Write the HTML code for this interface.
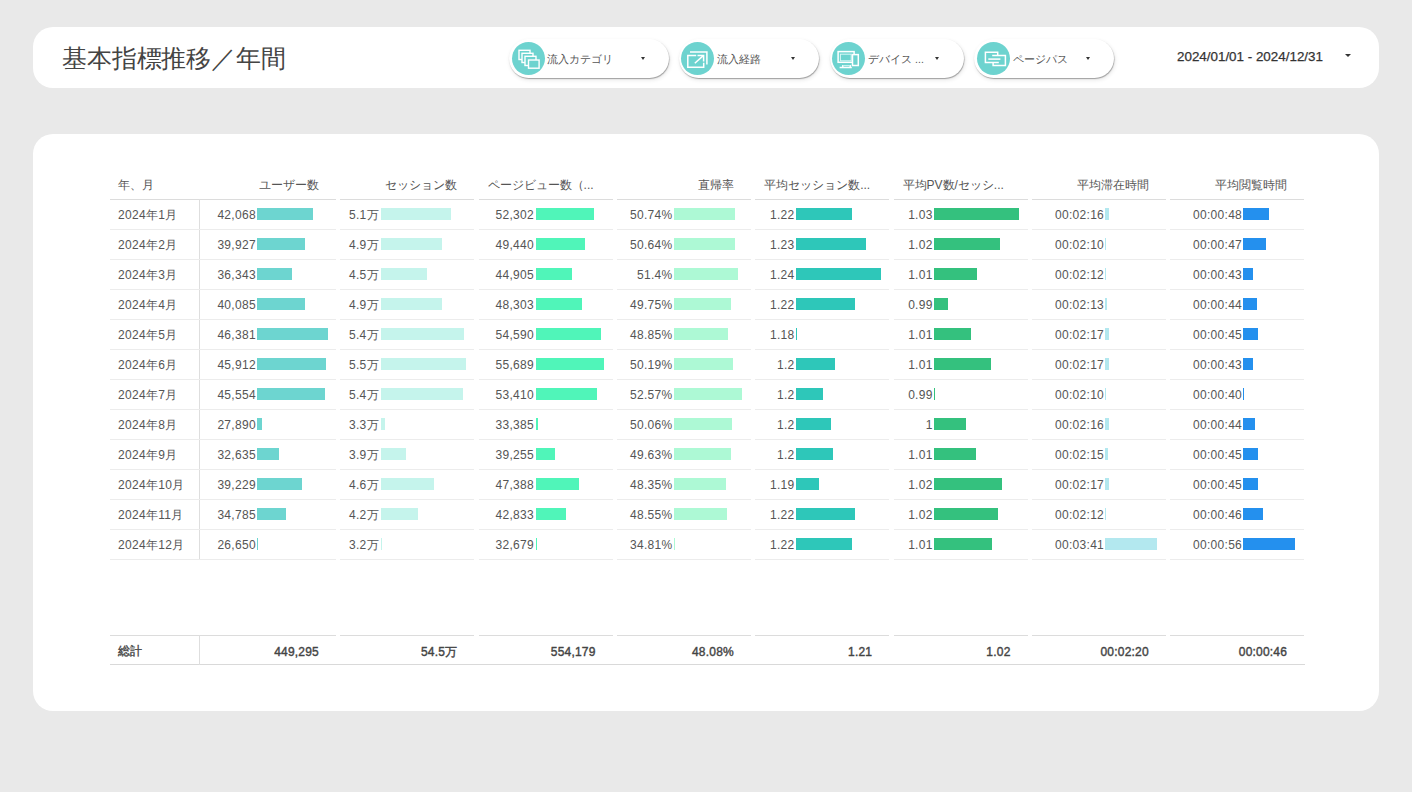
<!DOCTYPE html>
<html><head><meta charset="utf-8"><style>
*{margin:0;padding:0;box-sizing:border-box}
html,body{width:1412px;height:792px;overflow:hidden;background:#e9e9e9;font-family:"Liberation Sans",sans-serif;}
.card{position:absolute;background:#fff;border-radius:20px}
.t{position:absolute;white-space:nowrap;font-size:12px;line-height:14px;color:#555555;letter-spacing:0.3px}
.h{position:absolute;white-space:nowrap;font-size:12px;line-height:14px;color:#555555}
.b{position:absolute;height:12px}
.ln{position:absolute;height:1px}
.chip{position:absolute;top:39px;height:39px;background:#fff;border-radius:20px;box-shadow:0.5px 1px 1px rgba(0,0,0,0.32),1px 2px 4px rgba(0,0,0,0.10)}
.circ{position:absolute;top:2.5px;width:33px;height:33px;border-radius:50%;background:#6dd3cf}
.ct{position:absolute;top:13.8px;font-size:10.5px;line-height:12px;color:#555;white-space:nowrap}
.arr{position:absolute;top:18px;width:0;height:0;border-left:2.5px solid transparent;border-right:2.5px solid transparent;border-top:3px solid #333}
</style></head><body>
<div class="card" style="left:33px;top:27px;width:1346px;height:61px"></div>
<div class="t" style="left:62px;top:42.5px;font-size:25px;line-height:30px;color:#444;letter-spacing:-0.15px">基本指標推移／年間</div>
<div class="chip" style="left:509px;width:160px"><div class="circ" style="left:2.7px"><svg width="33" height="33" viewBox="0 0 33 33"><g fill="#6dd3cf" stroke="#fff" stroke-width="1.4"><rect x="7" y="8.3" width="11" height="9.2"/><rect x="10" y="11.3" width="11" height="9.2"/><rect x="13" y="14.3" width="11" height="9.2"/><rect x="16.5" y="18" width="10.6" height="8.2"/></g></svg></div><div class="ct" style="left:38px">流入カテゴリ</div><div class="arr" style="left:131.5px"></div></div>
<div class="chip" style="left:678.5px;width:140px"><div class="circ" style="left:2.7px"><svg width="33" height="33" viewBox="0 0 33 33"><g fill="none" stroke="#fff" stroke-width="1.5"><path d="M9 10.1H25.9V22.4"/><path d="M15.2 13.5H6.8V25.3H22.7V20.8"/><path d="M16.5 13.4H22.6V19.4"/><path d="M13.8 21.2L22 13.9"/></g></svg></div><div class="ct" style="left:38.200000000000045px">流入経路</div><div class="arr" style="left:112.2px"></div></div>
<div class="chip" style="left:829.6px;width:134px"><div class="circ" style="left:2.7px"><svg width="33" height="33" viewBox="0 0 33 33"><g fill="none" stroke="#fff" stroke-width="1.5"><rect x="6.1" y="9.6" width="16" height="10.7"/><rect x="8.4" y="12.2" width="10.8" height="6.6" stroke-width="1" stroke="#d8f7f5"/><path d="M7.6 25.6H19.8M10.8 23V25.6M18.2 23V25.6"/><path d="M10.8 23.6H18.2" stroke-width="1.2" stroke="#c8f2ef"/><rect x="20.5" y="12.6" width="5.8" height="10.9" fill="#6dd3cf"/></g></svg></div><div class="ct" style="left:38.60000000000002px">デバイス ...</div><div class="arr" style="left:105.4px"></div></div>
<div class="chip" style="left:974px;width:140px"><div class="circ" style="left:2.7px"><svg width="33" height="33" viewBox="0 0 33 33"><g fill="none" stroke="#fff" stroke-width="1.5"><path d="M20.7 13.3V10.3H8.4V20.6H21.8"/><path d="M16.1 20.2V23.5H28.4V13.5H15.2"/><path d="M11.3 17.1H23.4"/></g></svg></div><div class="ct" style="left:38.60000000000002px">ページパス</div><div class="arr" style="left:112.2px"></div></div>
<div class="t" style="left:1177px;top:49px;font-size:13.4px;line-height:15px;color:#333;letter-spacing:0;-webkit-text-stroke:0.25px #333">2024/01/01 - 2024/12/31</div>
<div class="arr" style="left:1344.5px;top:54px;border-left-width:3.5px;border-right-width:3.5px;border-top-width:3.5px"></div>
<div class="card" style="left:33px;top:133.5px;width:1346px;height:577.5px"></div>
<div class="h" style="left:118px;top:178px">年、月</div>
<div class="ln" style="left:110px;top:199px;width:92px;background:#dcdcdc"></div>
<div class="ln" style="left:110px;top:635px;width:92px;background:#dcdcdc"></div>
<div class="ln" style="left:110px;top:664px;width:1195px;background:#d9d9d9"></div>
<div style="position:absolute;left:198.5px;top:199px;width:1.5px;height:361px;background:#dedede"></div>
<div style="position:absolute;left:198.5px;top:635px;width:1.5px;height:30px;background:#dedede"></div>
<div class="t" style="left:118px;top:208px">2024年1月</div>
<div class="ln" style="left:110px;top:229px;width:92px;background:#ececec"></div>
<div class="t" style="left:118px;top:238px">2024年2月</div>
<div class="ln" style="left:110px;top:259px;width:92px;background:#ececec"></div>
<div class="t" style="left:118px;top:268px">2024年3月</div>
<div class="ln" style="left:110px;top:289px;width:92px;background:#ececec"></div>
<div class="t" style="left:118px;top:298px">2024年4月</div>
<div class="ln" style="left:110px;top:319px;width:92px;background:#ececec"></div>
<div class="t" style="left:118px;top:328px">2024年5月</div>
<div class="ln" style="left:110px;top:349px;width:92px;background:#ececec"></div>
<div class="t" style="left:118px;top:358px">2024年6月</div>
<div class="ln" style="left:110px;top:379px;width:92px;background:#ececec"></div>
<div class="t" style="left:118px;top:388px">2024年7月</div>
<div class="ln" style="left:110px;top:409px;width:92px;background:#ececec"></div>
<div class="t" style="left:118px;top:418px">2024年8月</div>
<div class="ln" style="left:110px;top:439px;width:92px;background:#ececec"></div>
<div class="t" style="left:118px;top:448px">2024年9月</div>
<div class="ln" style="left:110px;top:469px;width:92px;background:#ececec"></div>
<div class="t" style="left:118px;top:478px">2024年10月</div>
<div class="ln" style="left:110px;top:499px;width:92px;background:#ececec"></div>
<div class="t" style="left:118px;top:508px">2024年11月</div>
<div class="ln" style="left:110px;top:529px;width:92px;background:#ececec"></div>
<div class="t" style="left:118px;top:538px">2024年12月</div>
<div class="ln" style="left:110px;top:559px;width:92px;background:#ececec"></div>
<div class="t" style="left:118px;top:644px;color:#444;letter-spacing:0;-webkit-text-stroke:0.35px #444">総計</div>
<div class="h" style="left:19.0px;width:300px;text-align:right;top:178px">ユーザー数</div>
<div class="ln" style="left:202.0px;top:199px;width:134px;background:#dcdcdc"></div>
<div class="ln" style="left:202.0px;top:635px;width:134px;background:#dcdcdc"></div>
<div class="t" style="left:55.9px;width:200px;text-align:right;top:208px">42,068</div><div class="b" style="left:257px;top:208.4px;width:55.5px;background:#6dd5d0"></div><div class="ln" style="left:202.0px;top:229px;width:134px;background:#ececec"></div>
<div class="t" style="left:55.9px;width:200px;text-align:right;top:238px">39,927</div><div class="b" style="left:257px;top:238.4px;width:47.8px;background:#6dd5d0"></div><div class="ln" style="left:202.0px;top:259px;width:134px;background:#ececec"></div>
<div class="t" style="left:55.9px;width:200px;text-align:right;top:268px">36,343</div><div class="b" style="left:257px;top:268.4px;width:34.9px;background:#6dd5d0"></div><div class="ln" style="left:202.0px;top:289px;width:134px;background:#ececec"></div>
<div class="t" style="left:55.9px;width:200px;text-align:right;top:298px">40,085</div><div class="b" style="left:257px;top:298.4px;width:48.3px;background:#6dd5d0"></div><div class="ln" style="left:202.0px;top:319px;width:134px;background:#ececec"></div>
<div class="t" style="left:55.9px;width:200px;text-align:right;top:328px">46,381</div><div class="b" style="left:257px;top:328.4px;width:71.0px;background:#6dd5d0"></div><div class="ln" style="left:202.0px;top:349px;width:134px;background:#ececec"></div>
<div class="t" style="left:55.9px;width:200px;text-align:right;top:358px">45,912</div><div class="b" style="left:257px;top:358.4px;width:69.3px;background:#6dd5d0"></div><div class="ln" style="left:202.0px;top:379px;width:134px;background:#ececec"></div>
<div class="t" style="left:55.9px;width:200px;text-align:right;top:388px">45,554</div><div class="b" style="left:257px;top:388.4px;width:68.0px;background:#6dd5d0"></div><div class="ln" style="left:202.0px;top:409px;width:134px;background:#ececec"></div>
<div class="t" style="left:55.9px;width:200px;text-align:right;top:418px">27,890</div><div class="b" style="left:257px;top:418.4px;width:4.5px;background:#6dd5d0"></div><div class="ln" style="left:202.0px;top:439px;width:134px;background:#ececec"></div>
<div class="t" style="left:55.9px;width:200px;text-align:right;top:448px">32,635</div><div class="b" style="left:257px;top:448.4px;width:21.5px;background:#6dd5d0"></div><div class="ln" style="left:202.0px;top:469px;width:134px;background:#ececec"></div>
<div class="t" style="left:55.9px;width:200px;text-align:right;top:478px">39,229</div><div class="b" style="left:257px;top:478.4px;width:45.3px;background:#6dd5d0"></div><div class="ln" style="left:202.0px;top:499px;width:134px;background:#ececec"></div>
<div class="t" style="left:55.9px;width:200px;text-align:right;top:508px">34,785</div><div class="b" style="left:257px;top:508.4px;width:29.3px;background:#6dd5d0"></div><div class="ln" style="left:202.0px;top:529px;width:134px;background:#ececec"></div>
<div class="t" style="left:55.9px;width:200px;text-align:right;top:538px">26,650</div><div class="b" style="left:257px;top:538.4px;width:1.0px;background:#6dd5d0"></div><div class="ln" style="left:202.0px;top:559px;width:134px;background:#ececec"></div>
<div class="t" style="left:119.0px;width:200px;text-align:right;top:645px;letter-spacing:0.2px;color:#444;-webkit-text-stroke:0.4px #444">449,295</div>
<div class="h" style="left:157.3px;width:300px;text-align:right;top:178px">セッション数</div>
<div class="ln" style="left:340.3px;top:199px;width:134px;background:#dcdcdc"></div>
<div class="ln" style="left:340.3px;top:635px;width:134px;background:#dcdcdc"></div>
<div class="t" style="left:178.9px;width:200px;text-align:right;top:208px">5.1万</div><div class="b" style="left:381px;top:208.4px;width:69.8px;background:#c5f4ec"></div><div class="ln" style="left:340.3px;top:229px;width:134px;background:#ececec"></div>
<div class="t" style="left:178.9px;width:200px;text-align:right;top:238px">4.9万</div><div class="b" style="left:381px;top:238.4px;width:60.9px;background:#c5f4ec"></div><div class="ln" style="left:340.3px;top:259px;width:134px;background:#ececec"></div>
<div class="t" style="left:178.9px;width:200px;text-align:right;top:268px">4.5万</div><div class="b" style="left:381px;top:268.4px;width:45.8px;background:#c5f4ec"></div><div class="ln" style="left:340.3px;top:289px;width:134px;background:#ececec"></div>
<div class="t" style="left:178.9px;width:200px;text-align:right;top:298px">4.9万</div><div class="b" style="left:381px;top:298.4px;width:60.9px;background:#c5f4ec"></div><div class="ln" style="left:340.3px;top:319px;width:134px;background:#ececec"></div>
<div class="t" style="left:178.9px;width:200px;text-align:right;top:328px">5.4万</div><div class="b" style="left:381px;top:328.4px;width:82.8px;background:#c5f4ec"></div><div class="ln" style="left:340.3px;top:349px;width:134px;background:#ececec"></div>
<div class="t" style="left:178.9px;width:200px;text-align:right;top:358px">5.5万</div><div class="b" style="left:381px;top:358.4px;width:84.9px;background:#c5f4ec"></div><div class="ln" style="left:340.3px;top:379px;width:134px;background:#ececec"></div>
<div class="t" style="left:178.9px;width:200px;text-align:right;top:388px">5.4万</div><div class="b" style="left:381px;top:388.4px;width:81.7px;background:#c5f4ec"></div><div class="ln" style="left:340.3px;top:409px;width:134px;background:#ececec"></div>
<div class="t" style="left:178.9px;width:200px;text-align:right;top:418px">3.3万</div><div class="b" style="left:381px;top:418.4px;width:4.0px;background:#c5f4ec"></div><div class="ln" style="left:340.3px;top:439px;width:134px;background:#ececec"></div>
<div class="t" style="left:178.9px;width:200px;text-align:right;top:448px">3.9万</div><div class="b" style="left:381px;top:448.4px;width:25.1px;background:#c5f4ec"></div><div class="ln" style="left:340.3px;top:469px;width:134px;background:#ececec"></div>
<div class="t" style="left:178.9px;width:200px;text-align:right;top:478px">4.6万</div><div class="b" style="left:381px;top:478.4px;width:53.1px;background:#c5f4ec"></div><div class="ln" style="left:340.3px;top:499px;width:134px;background:#ececec"></div>
<div class="t" style="left:178.9px;width:200px;text-align:right;top:508px">4.2万</div><div class="b" style="left:381px;top:508.4px;width:36.9px;background:#c5f4ec"></div><div class="ln" style="left:340.3px;top:529px;width:134px;background:#ececec"></div>
<div class="t" style="left:178.9px;width:200px;text-align:right;top:538px">3.2万</div><div class="b" style="left:381px;top:538.4px;width:1.0px;background:#c5f4ec"></div><div class="ln" style="left:340.3px;top:559px;width:134px;background:#ececec"></div>
<div class="t" style="left:257.3px;width:200px;text-align:right;top:645px;letter-spacing:0.2px;color:#444;-webkit-text-stroke:0.4px #444">54.5万</div>
<div class="h" style="left:487.6px;top:178px">ページビュー数（...</div>
<div class="ln" style="left:478.6px;top:199px;width:134px;background:#dcdcdc"></div>
<div class="ln" style="left:478.6px;top:635px;width:134px;background:#dcdcdc"></div>
<div class="t" style="left:334.0px;width:200px;text-align:right;top:208px">52,302</div><div class="b" style="left:535.8px;top:208.4px;width:58.0px;background:#50f5b9"></div><div class="ln" style="left:478.6px;top:229px;width:134px;background:#ececec"></div>
<div class="t" style="left:334.0px;width:200px;text-align:right;top:238px">49,440</div><div class="b" style="left:535.8px;top:238.4px;width:49.5px;background:#50f5b9"></div><div class="ln" style="left:478.6px;top:259px;width:134px;background:#ececec"></div>
<div class="t" style="left:334.0px;width:200px;text-align:right;top:268px">44,905</div><div class="b" style="left:535.8px;top:268.4px;width:36.1px;background:#50f5b9"></div><div class="ln" style="left:478.6px;top:289px;width:134px;background:#ececec"></div>
<div class="t" style="left:334.0px;width:200px;text-align:right;top:298px">48,303</div><div class="b" style="left:535.8px;top:298.4px;width:46.2px;background:#50f5b9"></div><div class="ln" style="left:478.6px;top:319px;width:134px;background:#ececec"></div>
<div class="t" style="left:334.0px;width:200px;text-align:right;top:328px">54,590</div><div class="b" style="left:535.8px;top:328.4px;width:64.8px;background:#50f5b9"></div><div class="ln" style="left:478.6px;top:349px;width:134px;background:#ececec"></div>
<div class="t" style="left:334.0px;width:200px;text-align:right;top:358px">55,689</div><div class="b" style="left:535.8px;top:358.4px;width:68.0px;background:#50f5b9"></div><div class="ln" style="left:478.6px;top:379px;width:134px;background:#ececec"></div>
<div class="t" style="left:334.0px;width:200px;text-align:right;top:388px">53,410</div><div class="b" style="left:535.8px;top:388.4px;width:61.3px;background:#50f5b9"></div><div class="ln" style="left:478.6px;top:409px;width:134px;background:#ececec"></div>
<div class="t" style="left:334.0px;width:200px;text-align:right;top:418px">33,385</div><div class="b" style="left:535.8px;top:418.4px;width:2.1px;background:#50f5b9"></div><div class="ln" style="left:478.6px;top:439px;width:134px;background:#ececec"></div>
<div class="t" style="left:334.0px;width:200px;text-align:right;top:448px">39,255</div><div class="b" style="left:535.8px;top:448.4px;width:19.4px;background:#50f5b9"></div><div class="ln" style="left:478.6px;top:469px;width:134px;background:#ececec"></div>
<div class="t" style="left:334.0px;width:200px;text-align:right;top:478px">47,388</div><div class="b" style="left:535.8px;top:478.4px;width:43.5px;background:#50f5b9"></div><div class="ln" style="left:478.6px;top:499px;width:134px;background:#ececec"></div>
<div class="t" style="left:334.0px;width:200px;text-align:right;top:508px">42,833</div><div class="b" style="left:535.8px;top:508.4px;width:30.0px;background:#50f5b9"></div><div class="ln" style="left:478.6px;top:529px;width:134px;background:#ececec"></div>
<div class="t" style="left:334.0px;width:200px;text-align:right;top:538px">32,679</div><div class="b" style="left:535.8px;top:538.4px;width:1.0px;background:#50f5b9"></div><div class="ln" style="left:478.6px;top:559px;width:134px;background:#ececec"></div>
<div class="t" style="left:395.6px;width:200px;text-align:right;top:645px;letter-spacing:0.2px;color:#444;-webkit-text-stroke:0.4px #444">554,179</div>
<div class="h" style="left:433.9000000000001px;width:300px;text-align:right;top:178px">直帰率</div>
<div class="ln" style="left:616.9000000000001px;top:199px;width:134px;background:#dcdcdc"></div>
<div class="ln" style="left:616.9000000000001px;top:635px;width:134px;background:#dcdcdc"></div>
<div class="t" style="left:472.5px;width:200px;text-align:right;top:208px">50.74%</div><div class="b" style="left:674.1px;top:208.4px;width:61.0px;background:#adf9d5"></div><div class="ln" style="left:616.9000000000001px;top:229px;width:134px;background:#ececec"></div>
<div class="t" style="left:472.5px;width:200px;text-align:right;top:238px">50.64%</div><div class="b" style="left:674.1px;top:238.4px;width:60.6px;background:#adf9d5"></div><div class="ln" style="left:616.9000000000001px;top:259px;width:134px;background:#ececec"></div>
<div class="t" style="left:472.5px;width:200px;text-align:right;top:268px">51.4%</div><div class="b" style="left:674.1px;top:268.4px;width:63.5px;background:#adf9d5"></div><div class="ln" style="left:616.9000000000001px;top:289px;width:134px;background:#ececec"></div>
<div class="t" style="left:472.5px;width:200px;text-align:right;top:298px">49.75%</div><div class="b" style="left:674.1px;top:298.4px;width:57.2px;background:#adf9d5"></div><div class="ln" style="left:616.9000000000001px;top:319px;width:134px;background:#ececec"></div>
<div class="t" style="left:472.5px;width:200px;text-align:right;top:328px">48.85%</div><div class="b" style="left:674.1px;top:328.4px;width:53.8px;background:#adf9d5"></div><div class="ln" style="left:616.9000000000001px;top:349px;width:134px;background:#ececec"></div>
<div class="t" style="left:472.5px;width:200px;text-align:right;top:358px">50.19%</div><div class="b" style="left:674.1px;top:358.4px;width:58.9px;background:#adf9d5"></div><div class="ln" style="left:616.9000000000001px;top:379px;width:134px;background:#ececec"></div>
<div class="t" style="left:472.5px;width:200px;text-align:right;top:388px">52.57%</div><div class="b" style="left:674.1px;top:388.4px;width:68.0px;background:#adf9d5"></div><div class="ln" style="left:616.9000000000001px;top:409px;width:134px;background:#ececec"></div>
<div class="t" style="left:472.5px;width:200px;text-align:right;top:418px">50.06%</div><div class="b" style="left:674.1px;top:418.4px;width:58.4px;background:#adf9d5"></div><div class="ln" style="left:616.9000000000001px;top:439px;width:134px;background:#ececec"></div>
<div class="t" style="left:472.5px;width:200px;text-align:right;top:448px">49.63%</div><div class="b" style="left:674.1px;top:448.4px;width:56.7px;background:#adf9d5"></div><div class="ln" style="left:616.9000000000001px;top:469px;width:134px;background:#ececec"></div>
<div class="t" style="left:472.5px;width:200px;text-align:right;top:478px">48.35%</div><div class="b" style="left:674.1px;top:478.4px;width:51.8px;background:#adf9d5"></div><div class="ln" style="left:616.9000000000001px;top:499px;width:134px;background:#ececec"></div>
<div class="t" style="left:472.5px;width:200px;text-align:right;top:508px">48.55%</div><div class="b" style="left:674.1px;top:508.4px;width:52.6px;background:#adf9d5"></div><div class="ln" style="left:616.9000000000001px;top:529px;width:134px;background:#ececec"></div>
<div class="t" style="left:472.5px;width:200px;text-align:right;top:538px">34.81%</div><div class="b" style="left:674.1px;top:538.4px;width:1.0px;background:#adf9d5"></div><div class="ln" style="left:616.9000000000001px;top:559px;width:134px;background:#ececec"></div>
<div class="t" style="left:533.9000000000001px;width:200px;text-align:right;top:645px;letter-spacing:0.2px;color:#444;-webkit-text-stroke:0.4px #444">48.08%</div>
<div class="h" style="left:764.2px;top:178px">平均セッション数...</div>
<div class="ln" style="left:755.2px;top:199px;width:134px;background:#dcdcdc"></div>
<div class="ln" style="left:755.2px;top:635px;width:134px;background:#dcdcdc"></div>
<div class="t" style="left:594.5px;width:200px;text-align:right;top:208px">1.22</div><div class="b" style="left:795.8px;top:208.4px;width:56.2px;background:#2ec7b9"></div><div class="ln" style="left:755.2px;top:229px;width:134px;background:#ececec"></div>
<div class="t" style="left:594.5px;width:200px;text-align:right;top:238px">1.23</div><div class="b" style="left:795.8px;top:238.4px;width:69.9px;background:#2ec7b9"></div><div class="ln" style="left:755.2px;top:259px;width:134px;background:#ececec"></div>
<div class="t" style="left:594.5px;width:200px;text-align:right;top:268px">1.24</div><div class="b" style="left:795.8px;top:268.4px;width:85.0px;background:#2ec7b9"></div><div class="ln" style="left:755.2px;top:289px;width:134px;background:#ececec"></div>
<div class="t" style="left:594.5px;width:200px;text-align:right;top:298px">1.22</div><div class="b" style="left:795.8px;top:298.4px;width:59.4px;background:#2ec7b9"></div><div class="ln" style="left:755.2px;top:319px;width:134px;background:#ececec"></div>
<div class="t" style="left:594.5px;width:200px;text-align:right;top:328px">1.18</div><div class="b" style="left:795.8px;top:328.4px;width:1.2px;background:#2ec7b9"></div><div class="ln" style="left:755.2px;top:349px;width:134px;background:#ececec"></div>
<div class="t" style="left:594.5px;width:200px;text-align:right;top:358px">1.2</div><div class="b" style="left:795.8px;top:358.4px;width:39.1px;background:#2ec7b9"></div><div class="ln" style="left:755.2px;top:379px;width:134px;background:#ececec"></div>
<div class="t" style="left:594.5px;width:200px;text-align:right;top:388px">1.2</div><div class="b" style="left:795.8px;top:388.4px;width:27.0px;background:#2ec7b9"></div><div class="ln" style="left:755.2px;top:409px;width:134px;background:#ececec"></div>
<div class="t" style="left:594.5px;width:200px;text-align:right;top:418px">1.2</div><div class="b" style="left:795.8px;top:418.4px;width:35.7px;background:#2ec7b9"></div><div class="ln" style="left:755.2px;top:439px;width:134px;background:#ececec"></div>
<div class="t" style="left:594.5px;width:200px;text-align:right;top:448px">1.2</div><div class="b" style="left:795.8px;top:448.4px;width:37.3px;background:#2ec7b9"></div><div class="ln" style="left:755.2px;top:469px;width:134px;background:#ececec"></div>
<div class="t" style="left:594.5px;width:200px;text-align:right;top:478px">1.19</div><div class="b" style="left:795.8px;top:478.4px;width:23.1px;background:#2ec7b9"></div><div class="ln" style="left:755.2px;top:499px;width:134px;background:#ececec"></div>
<div class="t" style="left:594.5px;width:200px;text-align:right;top:508px">1.22</div><div class="b" style="left:795.8px;top:508.4px;width:59.0px;background:#2ec7b9"></div><div class="ln" style="left:755.2px;top:529px;width:134px;background:#ececec"></div>
<div class="t" style="left:594.5px;width:200px;text-align:right;top:538px">1.22</div><div class="b" style="left:795.8px;top:538.4px;width:56.0px;background:#2ec7b9"></div><div class="ln" style="left:755.2px;top:559px;width:134px;background:#ececec"></div>
<div class="t" style="left:672.2px;width:200px;text-align:right;top:645px;letter-spacing:0.2px;color:#444;-webkit-text-stroke:0.4px #444">1.21</div>
<div class="h" style="left:902.5px;top:178px">平均PV数/セッシ...</div>
<div class="ln" style="left:893.5px;top:199px;width:134px;background:#dcdcdc"></div>
<div class="ln" style="left:893.5px;top:635px;width:134px;background:#dcdcdc"></div>
<div class="t" style="left:732.7px;width:200px;text-align:right;top:208px">1.03</div><div class="b" style="left:934.1px;top:208.4px;width:84.7px;background:#34c17e"></div><div class="ln" style="left:893.5px;top:229px;width:134px;background:#ececec"></div>
<div class="t" style="left:732.7px;width:200px;text-align:right;top:238px">1.02</div><div class="b" style="left:934.1px;top:238.4px;width:66.0px;background:#34c17e"></div><div class="ln" style="left:893.5px;top:259px;width:134px;background:#ececec"></div>
<div class="t" style="left:732.7px;width:200px;text-align:right;top:268px">1.01</div><div class="b" style="left:934.1px;top:268.4px;width:43.4px;background:#34c17e"></div><div class="ln" style="left:893.5px;top:289px;width:134px;background:#ececec"></div>
<div class="t" style="left:732.7px;width:200px;text-align:right;top:298px">0.99</div><div class="b" style="left:934.1px;top:298.4px;width:14.4px;background:#34c17e"></div><div class="ln" style="left:893.5px;top:319px;width:134px;background:#ececec"></div>
<div class="t" style="left:732.7px;width:200px;text-align:right;top:328px">1.01</div><div class="b" style="left:934.1px;top:328.4px;width:37.0px;background:#34c17e"></div><div class="ln" style="left:893.5px;top:349px;width:134px;background:#ececec"></div>
<div class="t" style="left:732.7px;width:200px;text-align:right;top:358px">1.01</div><div class="b" style="left:934.1px;top:358.4px;width:56.6px;background:#34c17e"></div><div class="ln" style="left:893.5px;top:379px;width:134px;background:#ececec"></div>
<div class="t" style="left:732.7px;width:200px;text-align:right;top:388px">0.99</div><div class="b" style="left:934.1px;top:388.4px;width:0.9px;background:#34c17e"></div><div class="ln" style="left:893.5px;top:409px;width:134px;background:#ececec"></div>
<div class="t" style="left:732.7px;width:200px;text-align:right;top:418px">1</div><div class="b" style="left:934.1px;top:418.4px;width:31.5px;background:#34c17e"></div><div class="ln" style="left:893.5px;top:439px;width:134px;background:#ececec"></div>
<div class="t" style="left:732.7px;width:200px;text-align:right;top:448px">1.01</div><div class="b" style="left:934.1px;top:448.4px;width:41.8px;background:#34c17e"></div><div class="ln" style="left:893.5px;top:469px;width:134px;background:#ececec"></div>
<div class="t" style="left:732.7px;width:200px;text-align:right;top:478px">1.02</div><div class="b" style="left:934.1px;top:478.4px;width:67.6px;background:#34c17e"></div><div class="ln" style="left:893.5px;top:499px;width:134px;background:#ececec"></div>
<div class="t" style="left:732.7px;width:200px;text-align:right;top:508px">1.02</div><div class="b" style="left:934.1px;top:508.4px;width:63.5px;background:#34c17e"></div><div class="ln" style="left:893.5px;top:529px;width:134px;background:#ececec"></div>
<div class="t" style="left:732.7px;width:200px;text-align:right;top:538px">1.01</div><div class="b" style="left:934.1px;top:538.4px;width:58.4px;background:#34c17e"></div><div class="ln" style="left:893.5px;top:559px;width:134px;background:#ececec"></div>
<div class="t" style="left:810.5px;width:200px;text-align:right;top:645px;letter-spacing:0.2px;color:#444;-webkit-text-stroke:0.4px #444">1.02</div>
<div class="h" style="left:848.8000000000002px;width:300px;text-align:right;top:178px">平均滞在時間</div>
<div class="ln" style="left:1031.8000000000002px;top:199px;width:134px;background:#dcdcdc"></div>
<div class="ln" style="left:1031.8000000000002px;top:635px;width:134px;background:#dcdcdc"></div>
<div class="t" style="left:904.1px;width:200px;text-align:right;top:208px">00:02:16</div><div class="b" style="left:1105.2px;top:208.4px;width:3.8px;background:#b3e8ef"></div><div class="ln" style="left:1031.8000000000002px;top:229px;width:134px;background:#ececec"></div>
<div class="t" style="left:904.1px;width:200px;text-align:right;top:238px">00:02:10</div><div class="b" style="left:1105.2px;top:238.4px;width:1.0px;background:#b3e8ef"></div><div class="ln" style="left:1031.8000000000002px;top:259px;width:134px;background:#ececec"></div>
<div class="t" style="left:904.1px;width:200px;text-align:right;top:268px">00:02:12</div><div class="b" style="left:1105.2px;top:268.4px;width:1.0px;background:#b3e8ef"></div><div class="ln" style="left:1031.8000000000002px;top:289px;width:134px;background:#ececec"></div>
<div class="t" style="left:904.1px;width:200px;text-align:right;top:298px">00:02:13</div><div class="b" style="left:1105.2px;top:298.4px;width:1.4px;background:#b3e8ef"></div><div class="ln" style="left:1031.8000000000002px;top:319px;width:134px;background:#ececec"></div>
<div class="t" style="left:904.1px;width:200px;text-align:right;top:328px">00:02:17</div><div class="b" style="left:1105.2px;top:328.4px;width:3.8px;background:#b3e8ef"></div><div class="ln" style="left:1031.8000000000002px;top:349px;width:134px;background:#ececec"></div>
<div class="t" style="left:904.1px;width:200px;text-align:right;top:358px">00:02:17</div><div class="b" style="left:1105.2px;top:358.4px;width:4.1px;background:#b3e8ef"></div><div class="ln" style="left:1031.8000000000002px;top:379px;width:134px;background:#ececec"></div>
<div class="t" style="left:904.1px;width:200px;text-align:right;top:388px">00:02:10</div><div class="b" style="left:1105.2px;top:388.4px;width:1.0px;background:#b3e8ef"></div><div class="ln" style="left:1031.8000000000002px;top:409px;width:134px;background:#ececec"></div>
<div class="t" style="left:904.1px;width:200px;text-align:right;top:418px">00:02:16</div><div class="b" style="left:1105.2px;top:418.4px;width:3.8px;background:#b3e8ef"></div><div class="ln" style="left:1031.8000000000002px;top:439px;width:134px;background:#ececec"></div>
<div class="t" style="left:904.1px;width:200px;text-align:right;top:448px">00:02:15</div><div class="b" style="left:1105.2px;top:448.4px;width:2.8px;background:#b3e8ef"></div><div class="ln" style="left:1031.8000000000002px;top:469px;width:134px;background:#ececec"></div>
<div class="t" style="left:904.1px;width:200px;text-align:right;top:478px">00:02:17</div><div class="b" style="left:1105.2px;top:478.4px;width:4.1px;background:#b3e8ef"></div><div class="ln" style="left:1031.8000000000002px;top:499px;width:134px;background:#ececec"></div>
<div class="t" style="left:904.1px;width:200px;text-align:right;top:508px">00:02:12</div><div class="b" style="left:1105.2px;top:508.4px;width:1.0px;background:#b3e8ef"></div><div class="ln" style="left:1031.8000000000002px;top:529px;width:134px;background:#ececec"></div>
<div class="t" style="left:904.1px;width:200px;text-align:right;top:538px">00:03:41</div><div class="b" style="left:1105.2px;top:538.4px;width:52.1px;background:#b3e8ef"></div><div class="ln" style="left:1031.8000000000002px;top:559px;width:134px;background:#ececec"></div>
<div class="t" style="left:948.8000000000002px;width:200px;text-align:right;top:645px;letter-spacing:0.2px;color:#444;-webkit-text-stroke:0.4px #444">00:02:20</div>
<div class="h" style="left:987.1000000000001px;width:300px;text-align:right;top:178px">平均閲覧時間</div>
<div class="ln" style="left:1170.1000000000001px;top:199px;width:134px;background:#dcdcdc"></div>
<div class="ln" style="left:1170.1000000000001px;top:635px;width:134px;background:#dcdcdc"></div>
<div class="t" style="left:1042.1px;width:200px;text-align:right;top:208px">00:00:48</div><div class="b" style="left:1243.2px;top:208.4px;width:26.2px;background:#2490ee"></div><div class="ln" style="left:1170.1000000000001px;top:229px;width:134px;background:#ececec"></div>
<div class="t" style="left:1042.1px;width:200px;text-align:right;top:238px">00:00:47</div><div class="b" style="left:1243.2px;top:238.4px;width:22.6px;background:#2490ee"></div><div class="ln" style="left:1170.1000000000001px;top:259px;width:134px;background:#ececec"></div>
<div class="t" style="left:1042.1px;width:200px;text-align:right;top:268px">00:00:43</div><div class="b" style="left:1243.2px;top:268.4px;width:9.8px;background:#2490ee"></div><div class="ln" style="left:1170.1000000000001px;top:289px;width:134px;background:#ececec"></div>
<div class="t" style="left:1042.1px;width:200px;text-align:right;top:298px">00:00:44</div><div class="b" style="left:1243.2px;top:298.4px;width:13.7px;background:#2490ee"></div><div class="ln" style="left:1170.1000000000001px;top:319px;width:134px;background:#ececec"></div>
<div class="t" style="left:1042.1px;width:200px;text-align:right;top:328px">00:00:45</div><div class="b" style="left:1243.2px;top:328.4px;width:14.4px;background:#2490ee"></div><div class="ln" style="left:1170.1000000000001px;top:349px;width:134px;background:#ececec"></div>
<div class="t" style="left:1042.1px;width:200px;text-align:right;top:358px">00:00:43</div><div class="b" style="left:1243.2px;top:358.4px;width:10.3px;background:#2490ee"></div><div class="ln" style="left:1170.1000000000001px;top:379px;width:134px;background:#ececec"></div>
<div class="t" style="left:1042.1px;width:200px;text-align:right;top:388px">00:00:40</div><div class="b" style="left:1243.2px;top:388.4px;width:1.0px;background:#2490ee"></div><div class="ln" style="left:1170.1000000000001px;top:409px;width:134px;background:#ececec"></div>
<div class="t" style="left:1042.1px;width:200px;text-align:right;top:418px">00:00:44</div><div class="b" style="left:1243.2px;top:418.4px;width:12.3px;background:#2490ee"></div><div class="ln" style="left:1170.1000000000001px;top:439px;width:134px;background:#ececec"></div>
<div class="t" style="left:1042.1px;width:200px;text-align:right;top:448px">00:00:45</div><div class="b" style="left:1243.2px;top:448.4px;width:14.8px;background:#2490ee"></div><div class="ln" style="left:1170.1000000000001px;top:469px;width:134px;background:#ececec"></div>
<div class="t" style="left:1042.1px;width:200px;text-align:right;top:478px">00:00:45</div><div class="b" style="left:1243.2px;top:478.4px;width:14.4px;background:#2490ee"></div><div class="ln" style="left:1170.1000000000001px;top:499px;width:134px;background:#ececec"></div>
<div class="t" style="left:1042.1px;width:200px;text-align:right;top:508px">00:00:46</div><div class="b" style="left:1243.2px;top:508.4px;width:20.1px;background:#2490ee"></div><div class="ln" style="left:1170.1000000000001px;top:529px;width:134px;background:#ececec"></div>
<div class="t" style="left:1042.1px;width:200px;text-align:right;top:538px">00:00:56</div><div class="b" style="left:1243.2px;top:538.4px;width:51.8px;background:#2490ee"></div><div class="ln" style="left:1170.1000000000001px;top:559px;width:134px;background:#ececec"></div>
<div class="t" style="left:1087.1000000000001px;width:200px;text-align:right;top:645px;letter-spacing:0.2px;color:#444;-webkit-text-stroke:0.4px #444">00:00:46</div>
</body></html>
